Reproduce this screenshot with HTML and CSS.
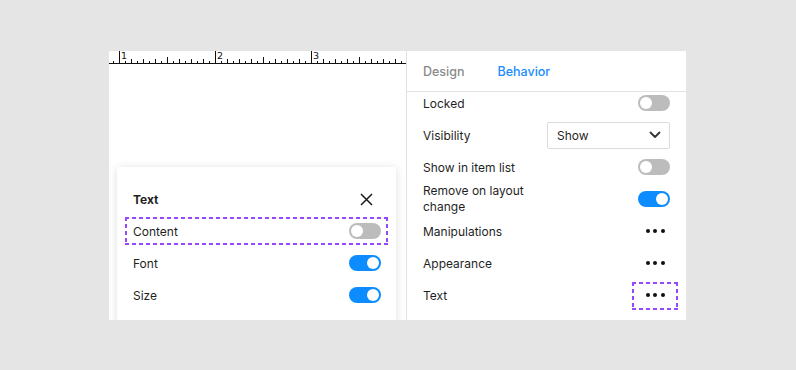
FILE: index.html
```html
<!DOCTYPE html>
<html>
<head>
<meta charset="utf-8">
<link rel="stylesheet" href="styles.css">
</head>
<body>
<div class="stage">
  <div class="canvas">
    <svg class="ruler" width="297" height="13" viewBox="0 0 297 13">
      <defs>
        <pattern id="ticks" patternUnits="userSpaceOnUse" x="10" y="0" width="96" height="13">
          <path d="M0.5 0V12 M6.5 10V12 M12.5 8V12 M18.5 10V12 M24.5 8V12 M30.5 10V12 M36.5 8V12 M42.5 10V12 M48.5 6V12 M54.5 10V12 M60.5 8V12 M66.5 10V12 M72.5 8V12 M78.5 10V12 M84.5 8V12 M90.5 10V12" stroke="#111" stroke-width="1" fill="none"/>
        </pattern>
      </defs>
      <rect x="0" y="0" width="297" height="13" fill="url(#ticks)"/>
      <path d="M0 12.5H297" stroke="#111" stroke-width="1"/>
      <text x="12" y="7.5" class="rl">1</text>
      <text x="108" y="7.5" class="rl">2</text>
      <text x="204" y="7.5" class="rl">3</text>
    </svg>
    <div class="popup">
      <div class="prow title">
        <span>Text</span>
        <svg class="close" width="13" height="13" viewBox="0 0 13 13"><path d="M1 1L12 12M12 1L1 12" stroke="#1a1a1a" stroke-width="1.5" fill="none"/></svg>
      </div>
      <div class="prow focus">
        <span>Content</span>
        <span class="toggle off"></span>
      </div>
      <div class="prow">
        <span>Font</span>
        <span class="toggle on"></span>
      </div>
      <div class="prow">
        <span>Size</span>
        <span class="toggle on"></span>
      </div>
    </div>
  </div>
  <div class="panel">
    <div class="tabs">
      <span class="tab">Design</span>
      <span class="tab active">Behavior</span>
    </div>
    <div class="rows">
      <div class="row"><span>Locked</span><span class="toggle off"></span></div>
      <div class="row"><span>Visibility</span>
        <div class="select"><span>Show</span>
          <svg width="12" height="8" viewBox="0 0 12 8"><path d="M1.5 1.5L6 6L10.5 1.5" stroke="#333" stroke-width="1.8" fill="none" stroke-linecap="round" stroke-linejoin="round"/></svg>
        </div>
      </div>
      <div class="row"><span>Show in item list</span><span class="toggle off"></span></div>
      <div class="row"><span class="wrap">Remove on layout change</span><span class="toggle on"></span></div>
      <div class="row"><span>Manipulations</span><span class="dots"><i></i><i></i><i></i></span></div>
      <div class="row"><span>Appearance</span><span class="dots"><i></i><i></i><i></i></span></div>
      <div class="row"><span>Text</span><span class="dots focus"><i></i><i></i><i></i></span></div>
    </div>
  </div>
</div>
</body>
</html>
```
FILE: styles.css
```css
* { box-sizing: border-box; }
html, body { margin: 0; padding: 0; }
body {
  background: #e5e5e5;
  font-family: Inter, "Noto Sans", sans-serif;
  font-size: 12px;
  color: #1f1f1f;
  width: 796px;
  height: 370px;
  overflow: hidden;
}
.stage {
  display: flex;
  padding: 51px 0 0 109px;
  height: 320px;
}
.canvas {
  position: relative;
  width: 297px;
  height: 269px;
  background: #fff;
  overflow: hidden;
}
.ruler { display: block; }
.rl { font-family: "DejaVu Sans", sans-serif; font-size: 9.5px; fill: #111; }
.popup {
  position: absolute;
  left: 8px;
  top: 116px;
  width: 279px;
  height: 190px;
  background: #fff;
  border-radius: 2px;
  box-shadow: 0 1px 10px rgba(0,0,0,0.13);
  padding: 16px 15px 0 16px;
}
.prow {
  position: relative;
  height: 32px;
  display: flex;
  align-items: center;
  justify-content: space-between;
}
.title span { font-weight: 700; }
.close { margin-right: 8px; }
.focus { position: relative; }
.focus::after {
  content: "";
  position: absolute;
  pointer-events: none;
  background:
    linear-gradient(90deg, #9747ff 4px, transparent 4px) 0 0 / 7px 2px repeat-x,
    linear-gradient(90deg, #9747ff 4px, transparent 4px) 0 100% / 7px 2px repeat-x,
    linear-gradient(#9747ff 4px, transparent 4px) 0 0 / 2px 7px repeat-y,
    linear-gradient(#9747ff 4px, transparent 4px) 100% 0 / 2px 7px repeat-y;
}
.prow.focus::after { left: -8px; right: -7px; top: 2px; bottom: 2px; }
.toggle {
  position: relative;
  width: 32px;
  height: 16px;
  border-radius: 8px;
  flex: none;
}
.toggle::before {
  content: "";
  position: absolute;
  top: 2px;
  width: 12px;
  height: 12px;
  border-radius: 50%;
  background: #fff;
}
.toggle.off { background: #bcbcbc; }
.toggle.off::before { left: 2px; }
.toggle.on { background: #0d8cff; }
.toggle.on::before { right: 2px; }
.panel {
  width: 280px;
  height: 269px;
  background: #fff;
  border-left: 1px solid #e2e2e2;
  overflow: hidden;
}
.tabs {
  height: 41px;
  border-bottom: 1px solid #e2e2e2;
  display: flex;
  align-items: center;
  gap: 33px;
  padding: 0 16px;
  font-weight: 500;
  font-size: 12.5px;
}
.tab { color: #8a8a8a; }
.tab.active { color: #1a8cff; }
.rows {
  margin-top: -5px;
  padding: 0 16px;
}
.row {
  height: 32px;
  display: flex;
  align-items: center;
  justify-content: space-between;
}
.wrap { width: 120px; line-height: 16px; }
.select {
  width: 123px;
  height: 27px;
  border: 1px solid #dcdcdc;
  border-radius: 2px;
  display: flex;
  align-items: center;
  justify-content: space-between;
  padding: 0 8px 0 9px;
}
.dots {
  position: relative;
  width: 30px;
  height: 16px;
  display: flex;
  align-items: center;
  justify-content: center;
  gap: 3.5px;
}
.dots i {
  width: 4px;
  height: 4px;
  border-radius: 50%;
  background: #111;
}
.dots.focus::after { left: -8px; right: -8px; top: -5px; bottom: -7px; }
```
